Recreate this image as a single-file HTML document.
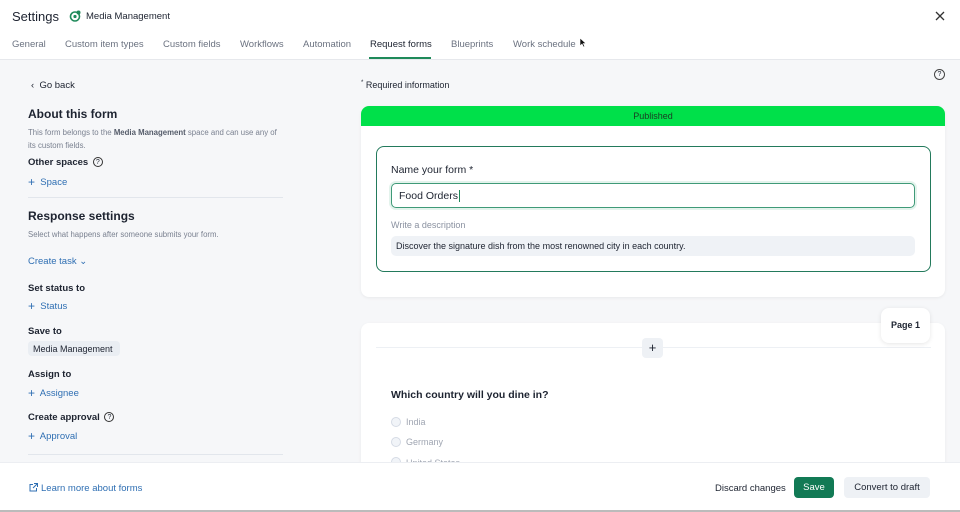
<!DOCTYPE html>
<html><head><meta charset="utf-8"><style>
*{box-sizing:border-box;margin:0;padding:0}
body{width:960px;height:512px;overflow:hidden;background:#f6f7f9;font-family:"Liberation Sans",sans-serif;color:#1d2330;position:relative}
.abs{position:absolute}
.hdr{left:0;top:0;width:960px;height:60px;background:#fff;border-bottom:1px solid #e6e8ec}
.tab{top:39px;font-size:9.5px;color:#6b7280}
.blue{color:#2f6fb3;font-size:9.5px}
.blue b{font-weight:normal;font-size:12px;vertical-align:-1px}
.lbl{font-size:9.5px;font-weight:bold;color:#1d2330}
.small{font-size:7.5px;color:#7a8190}
.q{display:inline-block;width:10px;height:10px;border:1px solid #333;border-radius:50%;font-size:7px;text-align:center;line-height:9px;vertical-align:middle;margin-left:2px;font-weight:normal}
.card{background:#fff;border-radius:8px;box-shadow:0 1px 3px rgba(0,0,0,.06)}
.radio{width:10px;height:10px;border:1px solid #d5dbe5;border-radius:50%;background:#f1f4f8}
</style></head><body>
<div class="abs hdr"></div>
<div class="abs" style="left:12px;top:9px;font-size:13px;font-weight:500">Settings</div>
<svg class="abs" style="left:69px;top:10px" width="12" height="12" viewBox="0 0 12 12"><circle cx="6" cy="6.5" r="4.5" fill="none" stroke="#1f8a5a" stroke-width="1.6"/><circle cx="6" cy="6.5" r="1.6" fill="#1f8a5a"/><circle cx="9.5" cy="2.5" r="2" fill="#1f8a5a"/></svg>
<div class="abs" style="left:86px;top:11px;font-size:9.5px">Media Management</div>
<svg class="abs" style="left:935px;top:11px" width="10" height="10" viewBox="0 0 10 10" stroke="#333" stroke-width="1.3"><path d="M1 1L9 9M9 1L1 9"/></svg>
<div class="abs tab" style="left:12px">General</div>
<div class="abs tab" style="left:65px">Custom item types</div>
<div class="abs tab" style="left:163px">Custom fields</div>
<div class="abs tab" style="left:240px">Workflows</div>
<div class="abs tab" style="left:303px">Automation</div>
<div class="abs tab" style="left:370px;color:#1d2330">Request forms</div>
<div class="abs" style="left:369px;top:57px;width:62px;height:2px;background:#1f8a5a"></div>
<div class="abs tab" style="left:451px">Blueprints</div>
<div class="abs tab" style="left:513px">Work schedule</div>
<svg class="abs" style="left:579px;top:37px" width="8" height="11" viewBox="0 0 8 11"><path d="M1 1v8l2-2 1.5 3 1.2-.6L4.3 6.5H7z" fill="#111" stroke="#fff" stroke-width=".6"/></svg>

<div class="abs" style="left:31px;top:80px;font-size:9.5px">‹&nbsp;&nbsp;Go back</div>
<div class="abs" style="left:28px;top:107px;font-size:12px;font-weight:bold">About this form</div>
<div class="abs small" style="left:28px;top:127px;line-height:12.5px;width:252px;font-size:7.8px">This form belongs to the <b style="color:#555c6a">Media Management</b> space and can use any of its custom fields.</div>
<div class="abs lbl" style="left:28px;top:157px">Other spaces <span class="q">?</span></div>
<div class="abs blue" style="left:28px;top:175px"><b>+</b>&nbsp; Space</div>
<div class="abs" style="left:28px;top:197px;width:255px;height:1px;background:#e2e6ec"></div>
<div class="abs" style="left:28px;top:209px;font-size:12px;font-weight:bold">Response settings</div>
<div class="abs small" style="left:28px;top:230px;font-size:7.8px">Select what happens after someone submits your form.</div>
<div class="abs blue" style="left:28px;top:256px">Create task ⌄</div>
<div class="abs lbl" style="left:28px;top:283px">Set status to</div>
<div class="abs blue" style="left:28px;top:299px"><b>+</b>&nbsp; Status</div>
<div class="abs lbl" style="left:28px;top:326px">Save to</div>
<div class="abs" style="left:28px;top:341px;width:92px;height:15px;background:#eaeef3;border-radius:4px;font-size:9px;padding:3px 5px">Media Management</div>
<div class="abs lbl" style="left:28px;top:369px">Assign to</div>
<div class="abs blue" style="left:28px;top:386px"><b>+</b>&nbsp; Assignee</div>
<div class="abs lbl" style="left:28px;top:412px">Create approval <span class="q">?</span></div>
<div class="abs blue" style="left:28px;top:429px"><b>+</b>&nbsp; Approval</div>
<div class="abs" style="left:28px;top:454px;width:255px;height:1px;background:#e2e6ec"></div>

<div class="abs" style="left:361px;top:80px;font-size:9px"><sup style="font-size:6px">*</sup> Required information</div>
<div class="abs" style="left:934px;top:69px;width:11px;height:11px;border:1px solid #444;border-radius:50%;font-size:7px;text-align:center;line-height:9px">?</div>

<div class="abs card" style="left:361px;top:106px;width:584px;height:191px;overflow:hidden">
<div style="height:20px;background:#00e04a;text-align:center;font-size:9px;line-height:20px;color:#1a3a22">Published</div>
</div>
<div class="abs" style="left:376px;top:146px;width:555px;height:126px;border:1.5px solid #237a5c;border-radius:8px;background:#fff"></div>
<div class="abs" style="left:391px;top:164px;font-size:10.5px">Name your form *</div>
<div class="abs" style="left:391px;top:183px;width:524px;height:25px;border:1px solid #3f9a78;border-radius:5px;box-shadow:0 0 0 2px #e3f3ec;font-size:10.5px;padding:6px 7px">Food Orders<span style="border-left:1px solid #1f8a5a;margin-left:1px"></span></div>
<div class="abs" style="left:391px;top:220px;font-size:9px;color:#8a91a0">Write a description</div>
<div class="abs" style="left:391px;top:236px;width:524px;height:20px;background:#eff2f6;border-radius:5px;font-size:9px;padding:5px 5px">Discover the signature dish from the most renowned city in each country.</div>

<div class="abs card" style="left:361px;top:323px;width:584px;height:160px;overflow:hidden">
<div class="abs radio" style="left:30px;top:134px"></div><div class="abs" style="left:45px;top:135px;font-size:9px;color:#a0a6b2">United States</div>
</div>
<div class="abs" style="left:376px;top:347px;width:555px;height:1px;background:#edf0f4"></div>
<div class="abs" style="left:642px;top:338px;width:21px;height:20px;background:#eef1f5;border-radius:4px;text-align:center;font-size:13px;line-height:20px">+</div>
<div class="abs card" style="left:881px;top:308px;width:49px;height:35px;box-shadow:0 1px 5px rgba(0,0,0,.1);font-size:9px;font-weight:bold;text-align:center;line-height:35px">Page 1</div>
<div class="abs" style="left:391px;top:389px;font-size:10.5px;font-weight:bold">Which country will you dine in?</div>
<div class="abs radio" style="left:391px;top:417px"></div><div class="abs" style="left:406px;top:417px;font-size:9px;color:#a0a6b2">India</div>
<div class="abs radio" style="left:391px;top:437px"></div><div class="abs" style="left:406px;top:437px;font-size:9px;color:#a0a6b2">Germany</div>

<div class="abs" style="left:0;top:462px;width:960px;height:48px;background:#fff;border-top:1px solid #eceef2"></div>
<div class="abs" style="left:0;top:510px;width:960px;height:2px;background:#bbb"></div>
<svg class="abs" style="left:29px;top:483px" width="9" height="9" viewBox="0 0 9 9" fill="none" stroke="#2f6fb3" stroke-width="1"><path d="M4 1.5H1v6.5h6.5V5M5 .5h3.5V4M8.5.5L4 5"/></svg>
<div class="abs blue" style="left:41px;top:483px">Learn more about forms</div>
<div class="abs" style="left:715px;top:483px;font-size:9.5px">Discard changes</div>
<div class="abs" style="left:794px;top:477px;width:40px;height:21px;background:#127a55;border-radius:4px;color:#fff;font-size:9.5px;text-align:center;line-height:21px">Save</div>
<div class="abs" style="left:844px;top:477px;width:86px;height:21px;background:#eef1f5;border-radius:4px;font-size:9.5px;text-align:center;line-height:21px">Convert to draft</div>
</body></html>
